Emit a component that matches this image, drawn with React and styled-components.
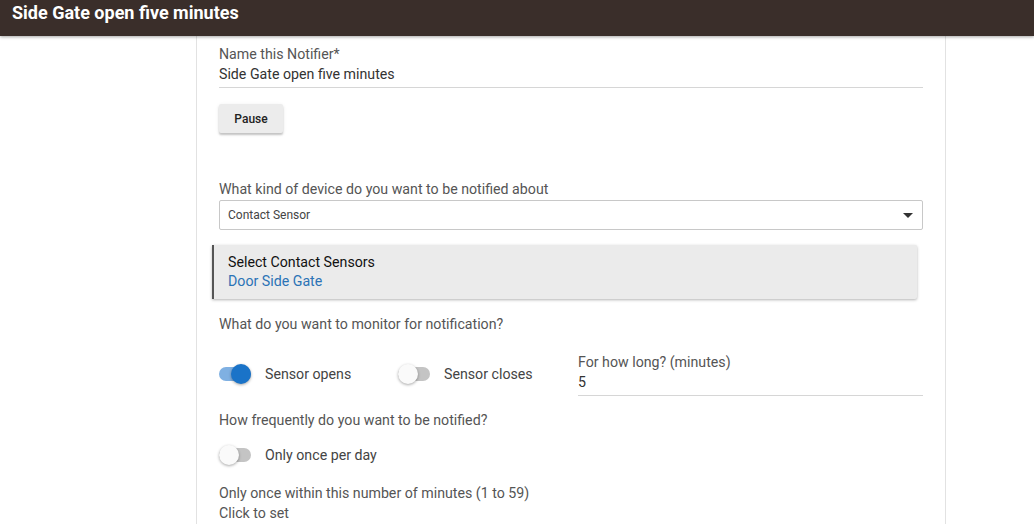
import styled, { createGlobalStyle } from "styled-components";

const Global = createGlobalStyle`
  html, body {
    margin: 0;
    padding: 0;
    background: #fff;
    font-family: Roboto, "Liberation Sans", Arial, sans-serif;
  }
`;

function Switch({ on }) {
  return (
    <Track on={on ? 1 : 0}>
      <Thumb on={on ? 1 : 0} />
    </Track>
  );
}

function Toggle({ on, children }) {
  return (
    <ToggleItem>
      <Switch on={on} />
      <ToggleLabel>{children}</ToggleLabel>
    </ToggleItem>
  );
}

export default function App() {
  return (
    <Page>
      <Global />
      <TopBar>
        <Title>Side Gate open five minutes</Title>
      </TopBar>

      <Panel>
        <Field>
          <Label>Name this Notifier*</Label>
          <Value>Side Gate open five minutes</Value>
        </Field>

        <PauseButton>Pause</PauseButton>

        <Label $top={46}>What kind of device do you want to be notified about</Label>
        <Select>
          <span>Contact Sensor</span>
          <Caret viewBox="0 0 10 5">
            <path d="M0 0h10L5 5z" fill="#333" />
          </Caret>
        </Select>

        <Card>
          <CardTitle>Select Contact Sensors</CardTitle>
          <CardLink>Door Side Gate</CardLink>
        </Card>

        <Label $top={15}>What do you want to monitor for notification?</Label>

        <MonitorRow>
          <Toggle on>Sensor opens</Toggle>
          <Toggle>Sensor closes</Toggle>
          <Field>
            <Label>For how long? (minutes)</Label>
            <Value>5</Value>
          </Field>
        </MonitorRow>

        <Label $top={14}>How frequently do you want to be notified?</Label>

        <SingleRow>
          <Toggle>Only once per day</Toggle>
        </SingleRow>

        <Label $top={16}>Only once within this number of minutes (1 to 59)</Label>
        <Label>Click to set</Label>
      </Panel>
    </Page>
  );
}

const Page = styled.div`
  min-height: 524px;
  display: flex;
  flex-direction: column;
`;

const TopBar = styled.div`
  height: 36px;
  background: #3a2e2a;
  box-shadow: 0 1px 3px rgba(0, 0, 0, 0.35);
  display: flex;
  align-items: flex-start;
  padding: 0 12px;
  position: relative;
  z-index: 1;
`;

const Title = styled.h1`
  margin: 1px 0 0;
  font-size: 18px;
  font-weight: 700;
  color: #fff;
  line-height: 23px;
`;

const Panel = styled.div`
  width: 704px;
  margin-left: 196px;
  padding: 8px 22px 0;
  border-left: 1px solid #e2e2e2;
  border-right: 1px solid #e2e2e2;
  display: flex;
  flex-direction: column;
  flex: 1;
`;

const Field = styled.div`
  display: flex;
  flex-direction: column;
  border-bottom: 1px solid #d6d6d6;
  padding-bottom: 3px;
`;

const Label = styled.div`
  font-size: 14.2px;
  line-height: 20px;
  color: #555;
  margin-top: ${(p) => p.$top || 0}px;
`;

const Value = styled.div`
  font-size: 14.2px;
  line-height: 20px;
  color: #333;
`;

const PauseButton = styled.button`
  align-self: flex-start;
  margin-top: 16px;
  width: 64px;
  height: 29px;
  border: none;
  border-radius: 2px;
  background: #ececec;
  box-shadow: 0 2px 2px rgba(0, 0, 0, 0.2), 0 1px 4px rgba(0, 0, 0, 0.08);
  font-family: inherit;
  font-size: 12px;
  font-weight: 500;
  color: #222;
  padding: 0;
`;

const Select = styled.div`
  margin-top: 1px;
  height: 28px;
  border: 1px solid #c8c8c8;
  border-radius: 2px;
  display: flex;
  align-items: center;
  justify-content: space-between;
  padding: 0 9px 0 8px;
  font-size: 12px;
  color: #444;
`;

const Caret = styled.svg`
  width: 10px;
  height: 5px;
`;

const Card = styled.div`
  margin: 15px 6px 0 -7px;
  height: 54px;
  box-sizing: border-box;
  background: #ebebeb;
  border-left: 2px solid #555;
  border-radius: 0 2px 2px 0;
  box-shadow: 0 1px 3px rgba(0, 0, 0, 0.3);
  padding: 8px 14px 0;
  display: flex;
  flex-direction: column;
`;

const CardTitle = styled.div`
  font-size: 14.2px;
  line-height: 19px;
  color: #111;
`;

const CardLink = styled.div`
  font-size: 14.2px;
  line-height: 19px;
  color: #2b73b6;
`;

const MonitorRow = styled.div`
  margin-top: 18px;
  display: grid;
  grid-template-columns: 179px 180px 1fr;
  align-items: center;
`;

const SingleRow = styled.div`
  margin-top: 13px;
  display: flex;
  height: 24px;
  align-items: center;
`;

const ToggleItem = styled.div`
  display: flex;
  align-items: center;
  gap: 14px;
`;

const ToggleLabel = styled.span`
  font-size: 14.2px;
  color: #444;
`;

const Track = styled.div`
  position: relative;
  width: 32px;
  height: 14px;
  border-radius: 7px;
  background: ${(p) => (p.on ? "#7fb0e2" : "#c4c4c4")};
`;

const Thumb = styled.div`
  position: absolute;
  top: -3px;
  left: ${(p) => (p.on ? "12px" : "0")};
  width: 20px;
  height: 20px;
  border-radius: 50%;
  background: ${(p) => (p.on ? "#1a73c8" : "#fafafa")};
  box-shadow: 0 1px 3px rgba(0, 0, 0, 0.35);
`;
